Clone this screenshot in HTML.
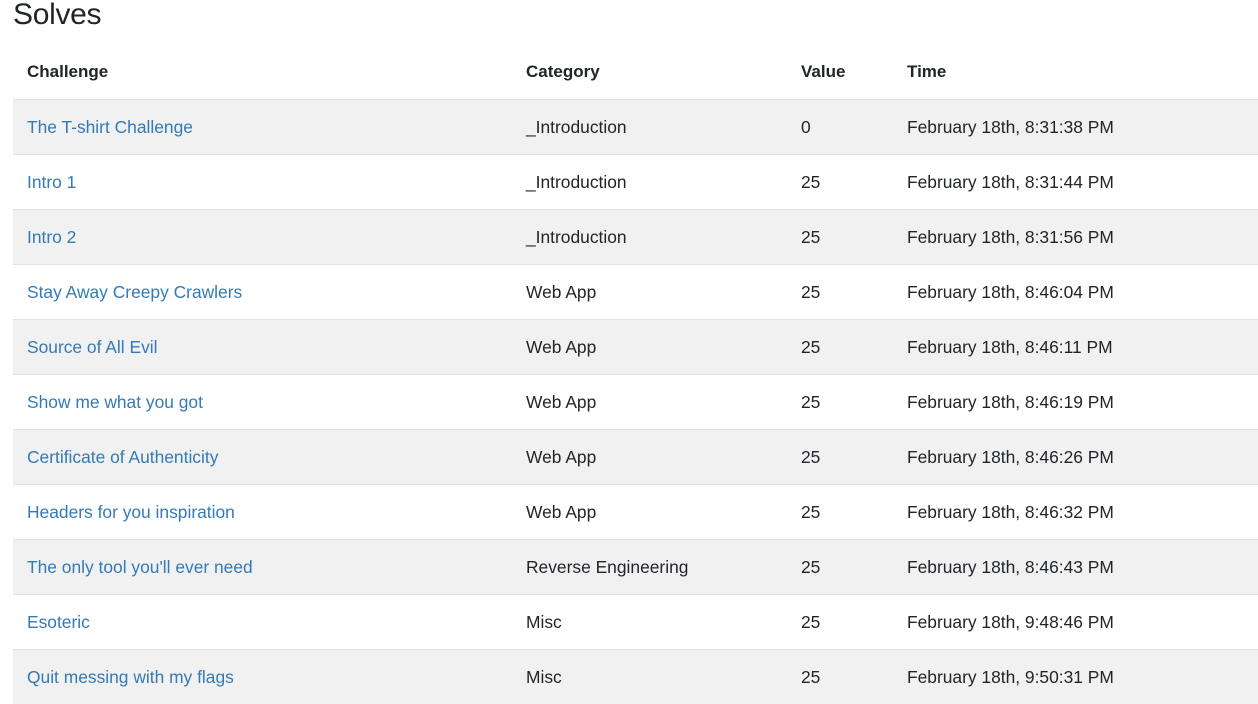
<!DOCTYPE html>
<html><head><style>
body{margin:0;background:#fff;font-family:"Liberation Sans",sans-serif;color:#212529;width:1258px;height:697px;overflow:hidden;position:relative}
h2{position:absolute;left:13px;top:-2px;margin:0;font-weight:400;font-size:30px;color:#212529;letter-spacing:-0.3px}
.row{position:absolute;left:13px;width:1245px;height:55px;border-top:1px solid #dee2e6;box-sizing:border-box;font-size:17.4px}
.row span{position:absolute;top:17px;white-space:nowrap}
.g{background:#f1f1f1}
.h{border-top:none;font-weight:bold;font-size:17px}
a{color:#337ab7;text-decoration:none}
.c1{left:14px}.c2{left:513px}.c3{left:788px}.c4{left:894px}
</style></head><body>
<h2>Solves</h2>
<div class="row h" style="top:45px"><span class="c1">Challenge</span><span class="c2">Category</span><span class="c3">Value</span><span class="c4">Time</span></div>
<div class="row g" style="top:99px"><span class="c1"><a>The T-shirt Challenge</a></span><span class="c2">_Introduction</span><span class="c3">0</span><span class="c4">February 18th, 8:31:38 PM</span></div>
<div class="row" style="top:154px"><span class="c1"><a>Intro 1</a></span><span class="c2">_Introduction</span><span class="c3">25</span><span class="c4">February 18th, 8:31:44 PM</span></div>
<div class="row g" style="top:209px"><span class="c1"><a>Intro 2</a></span><span class="c2">_Introduction</span><span class="c3">25</span><span class="c4">February 18th, 8:31:56 PM</span></div>
<div class="row" style="top:264px"><span class="c1"><a>Stay Away Creepy Crawlers</a></span><span class="c2">Web App</span><span class="c3">25</span><span class="c4">February 18th, 8:46:04 PM</span></div>
<div class="row g" style="top:319px"><span class="c1"><a>Source of All Evil</a></span><span class="c2">Web App</span><span class="c3">25</span><span class="c4">February 18th, 8:46:11 PM</span></div>
<div class="row" style="top:374px"><span class="c1"><a>Show me what you got</a></span><span class="c2">Web App</span><span class="c3">25</span><span class="c4">February 18th, 8:46:19 PM</span></div>
<div class="row g" style="top:429px"><span class="c1"><a>Certificate of Authenticity</a></span><span class="c2">Web App</span><span class="c3">25</span><span class="c4">February 18th, 8:46:26 PM</span></div>
<div class="row" style="top:484px"><span class="c1"><a>Headers for you inspiration</a></span><span class="c2">Web App</span><span class="c3">25</span><span class="c4">February 18th, 8:46:32 PM</span></div>
<div class="row g" style="top:539px"><span class="c1"><a>The only tool you'll ever need</a></span><span class="c2">Reverse Engineering</span><span class="c3">25</span><span class="c4">February 18th, 8:46:43 PM</span></div>
<div class="row" style="top:594px"><span class="c1"><a>Esoteric</a></span><span class="c2">Misc</span><span class="c3">25</span><span class="c4">February 18th, 9:48:46 PM</span></div>
<div class="row g" style="top:649px"><span class="c1"><a>Quit messing with my flags</a></span><span class="c2">Misc</span><span class="c3">25</span><span class="c4">February 18th, 9:50:31 PM</span></div>
</body></html>
